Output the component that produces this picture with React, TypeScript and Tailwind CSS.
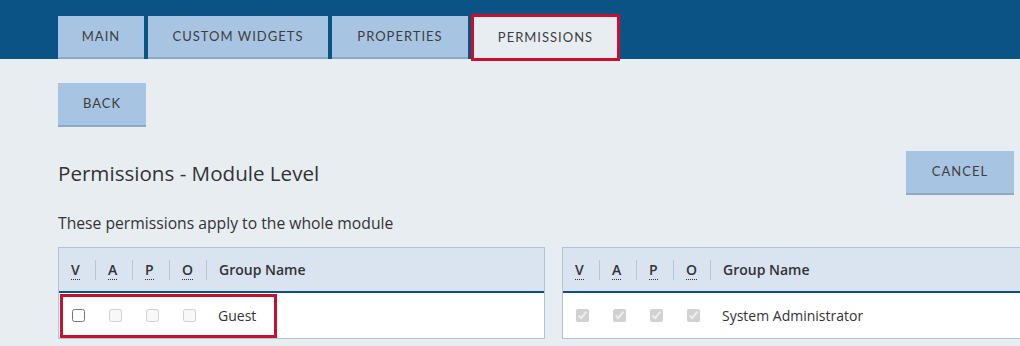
import React from 'react'

const body = { fontFamily: '"Open Sans", "Noto Sans", "Liberation Sans", sans-serif' }
const caps = 'font-["Lato","Liberation_Sans",sans-serif] text-[13px] tracking-[1px] text-[#3d3d3d]'

const tabs = [
  { label: 'MAIN', w: 'w-[86px]' },
  { label: 'CUSTOM WIDGETS', w: 'w-[180px]' },
  { label: 'PROPERTIES', w: 'w-[136px]' },
  { label: 'PERMISSIONS', w: 'w-[143px]' },
]

const Letter = ({ children }: { children: string }) => (
  <abbr className="no-underline border-b border-dotted border-[#333] leading-[15px]">{children}</abbr>
)

const Sep = () => <div className="w-px h-5 bg-[#b7c5d6]" />

function PermTable({ name, locked, highlight }: { name: string; locked?: boolean; highlight?: boolean }) {
  return (
    <div className="w-[487px] shrink-0 border-x border-t border-[#b3c3d6] bg-white">
      <div className="h-[45px] flex items-center bg-[#dae4f0] border-b-2 border-[#0b5385] text-[14px] text-[#333]">
        {['V', 'A', 'P', 'O'].map((l, i) => (
          <React.Fragment key={l}>
            {i > 0 && <Sep />}
            <div className="w-9 pl-3 font-semibold">
              <Letter>{l}</Letter>
            </div>
          </React.Fragment>
        ))}
        <Sep />
        <div className="pl-3 font-semibold">Group Name</div>
      </div>
      <div className="relative h-[46px] flex items-center border-b border-[#b3c3d6] text-[14px] text-[#333]">
        {[0, 1, 2, 3].map((i) => (
          <div key={i} className="w-[37px] pl-[13px] flex items-center">
            {locked ? (
              <input type="checkbox" checked disabled readOnly className="w-[13px] h-[13px]" />
            ) : (
              <input type="checkbox" disabled={i > 0} className="w-[13px] h-[13px]" />
            )}
          </div>
        ))}
        <div className="pl-[11px]">{name}</div>
        {highlight && (
          <div className="absolute left-[1px] top-[1px] w-[217px] h-[44px] border-[3px] border-[#c8102e]" />
        )}
      </div>
    </div>
  )
}

export default function App() {
  return (
    <div className="w-[1020px] h-[346px] overflow-hidden bg-[#e8edf2]" style={body}>
      <div className="h-[59px] bg-[#0b5385] flex items-end pl-[58px] gap-1">
        {tabs.map((t) => {
          const active = t.label === 'PERMISSIONS'
          return (
            <div
              key={t.label}
              className={
                active
                  ? `relative ${t.w} ml-[2px] h-[43px] flex items-center justify-center bg-[#e8edf2] ${caps}`
                  : `${t.w} h-[43px] flex items-center justify-center bg-[#a8c4e3] border-b-2 border-[#8ea9c8] ${caps}`
              }
            >
              {t.label}
              {active && <div className="absolute -left-[3px] -right-[3px] -top-[2px] -bottom-[2px] border-[3px] border-[#c8102e]" />}
            </div>
          )
        })}
      </div>

      <div className="pl-[58px] pt-6">
        <button className={`w-[88px] h-[44px] bg-[#a8c4e3] border-b-2 border-[#8ea9c8] ${caps}`}>BACK</button>

        <div className="mt-6 w-[956px] flex items-center justify-between">
          <h1 className="text-[20.6px] text-[#333]">Permissions - Module Level</h1>
          <button className={`w-[108px] h-[44px] bg-[#a8c4e3] border-b-2 border-[#8ea9c8] ${caps}`}>CANCEL</button>
        </div>

        <p className="mt-[18px] text-[15.7px] leading-5 text-[#333]">These permissions apply to the whole module</p>

        <div className="mt-[14px] flex gap-[17px]">
          <PermTable name="Guest" highlight />
          <PermTable name="System Administrator" locked />
        </div>
      </div>
    </div>
  )
}
